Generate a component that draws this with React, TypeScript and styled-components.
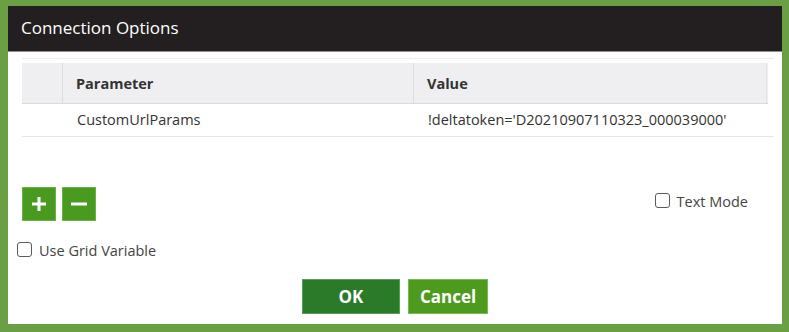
import React from "react";
import styled, { createGlobalStyle } from "styled-components";

const Global = createGlobalStyle`
  html, body { margin: 0; padding: 0; }
  body {
    background: #6a9f45;
    font-family: "Open Sans", "Liberation Sans", sans-serif;
    width: 789px;
    height: 332px;
    overflow: hidden;
  }
`;

const Frame = styled.div`
  padding: 6px 7px 8px 8px;
`;

const Dialog = styled.div`
  width: 774px;
  height: 318px;
  background: #ffffff;
  display: flex;
  flex-direction: column;
`;

const TitleBar = styled.div`
  height: 46px;
  box-sizing: border-box;
  background: #231f20;
  border-bottom: 1px solid #8c8c8c;
  color: #ffffff;
  font-size: 17px;
  display: flex;
  align-items: center;
  padding-left: 13px;
  padding-bottom: 2px;
`;

const Body = styled.div`
  flex: 1;
  display: flex;
  flex-direction: column;
  padding: 0 14px;
`;

const GridWrap = styled.div`
  margin-top: 6px;
  border-top: 1px solid #ececec;
  padding-top: 4px;
  width: 752px;
`;

const HeaderRow = styled.div`
  display: grid;
  grid-template-columns: 41px 351px 353px;
  height: 40px;
  width: 746px;
  background: #efeef0;
  border-bottom: 1px solid #dadada;
`;

const HeadCell = styled.div<{ $sep?: boolean; $last?: boolean }>`
  display: flex;
  align-items: center;
  padding-left: ${(p) => (p.$sep ? 13 : 0)}px;
  border-right: 1px solid ${(p) => (p.$last ? "#e2e2e2" : "#dcdcdc")};
  font-size: 14.5px;
  font-weight: 700;
  color: #333333;
`;

const DataRow = styled.div`
  display: grid;
  grid-template-columns: 41px 351px 360px;
  height: 32px;
  border-bottom: 1px solid #e6e6e6;
`;

const Cell = styled.div<{ $pad?: boolean }>`
  display: flex;
  align-items: center;
  padding-left: ${(p) => (p.$pad ? 14 : 0)}px;
  font-size: 14.5px;
  color: #333333;
  padding-bottom: 2px;
`;

const Toolbar = styled.div`
  margin-top: 50px;
  display: flex;
  align-items: flex-start;
  justify-content: space-between;
  height: 34px;
`;

const IconGroup = styled.div`
  display: flex;
  gap: 6px;
`;

const IconButton = styled.button`
  width: 34px;
  height: 34px;
  padding: 0;
  background: #4a9a22;
  border: 1px solid #6cb04a;
  display: flex;
  align-items: center;
  justify-content: center;
  cursor: pointer;
`;

const CheckLabel = styled.label<{ $shiftX?: number; $shiftY?: number; $right?: number }>`
  display: flex;
  align-items: center;
  gap: 7px;
  font-size: 14.5px;
  color: #444444;
  margin-left: ${(p) => p.$shiftX ?? 0}px;
  margin-top: ${(p) => p.$shiftY ?? 0}px;
  margin-right: ${(p) => p.$right ?? 0}px;
`;

const Box = styled.span`
  width: 15px;
  height: 15px;
  box-sizing: border-box;
  border: 1.5px solid #5a5a5a;
  border-radius: 3px;
  background: #fff;
  flex: none;
  margin-top: -3px;
`;

const Footer = styled.div`
  margin-top: auto;
  margin-bottom: 10px;
  display: flex;
  justify-content: center;
  gap: 8px;
`;

const ActionButton = styled.button<{ $primary?: boolean; $w: number }>`
  width: ${(p) => p.$w}px;
  height: 35px;
  background: ${(p) => (p.$primary ? "#2a7a2a" : "#4d9a1f")};
  border: 1px solid ${(p) => (p.$primary ? "#5a9a5a" : "#78b855")};
  color: #ffffff;
  font-family: "Open Sans", "Liberation Sans", sans-serif;
  font-size: 17px;
  font-weight: 700;
  padding: 0;
  cursor: pointer;
`;

const Plus = () => (
  <svg width="18" height="18" viewBox="0 0 18 18">
    <path d="M9 2v14M2 9h14" stroke="#fff" strokeWidth="3" />
  </svg>
);

const Minus = () => (
  <svg width="18" height="18" viewBox="0 0 18 18">
    <path d="M1 9h16" stroke="#fff" strokeWidth="3" />
  </svg>
);

export default function App() {
  return (
    <>
      <Global />
      <Frame>
        <Dialog>
          <TitleBar>Connection Options</TitleBar>
          <Body>
            <GridWrap>
              <HeaderRow>
                <HeadCell />
                <HeadCell $sep>Parameter</HeadCell>
                <HeadCell $sep $last>Value</HeadCell>
              </HeaderRow>
              <DataRow>
                <Cell />
                <Cell $pad>CustomUrlParams</Cell>
                <Cell $pad>!deltatoken='D20210907110323_000039000'</Cell>
              </DataRow>
            </GridWrap>
            <Toolbar>
              <IconGroup>
                <IconButton aria-label="Add"><Plus /></IconButton>
                <IconButton aria-label="Remove"><Minus /></IconButton>
              </IconGroup>
              <CheckLabel $shiftY={5} $right={20}>
                <Box />
                Text Mode
              </CheckLabel>
            </Toolbar>
            <CheckLabel $shiftX={-5} $shiftY={20}>
              <Box />
              Use Grid Variable
            </CheckLabel>
            <Footer>
              <ActionButton $primary $w={98}>OK</ActionButton>
              <ActionButton $w={80}>Cancel</ActionButton>
            </Footer>
          </Body>
        </Dialog>
      </Frame>
    </>
  );
}
